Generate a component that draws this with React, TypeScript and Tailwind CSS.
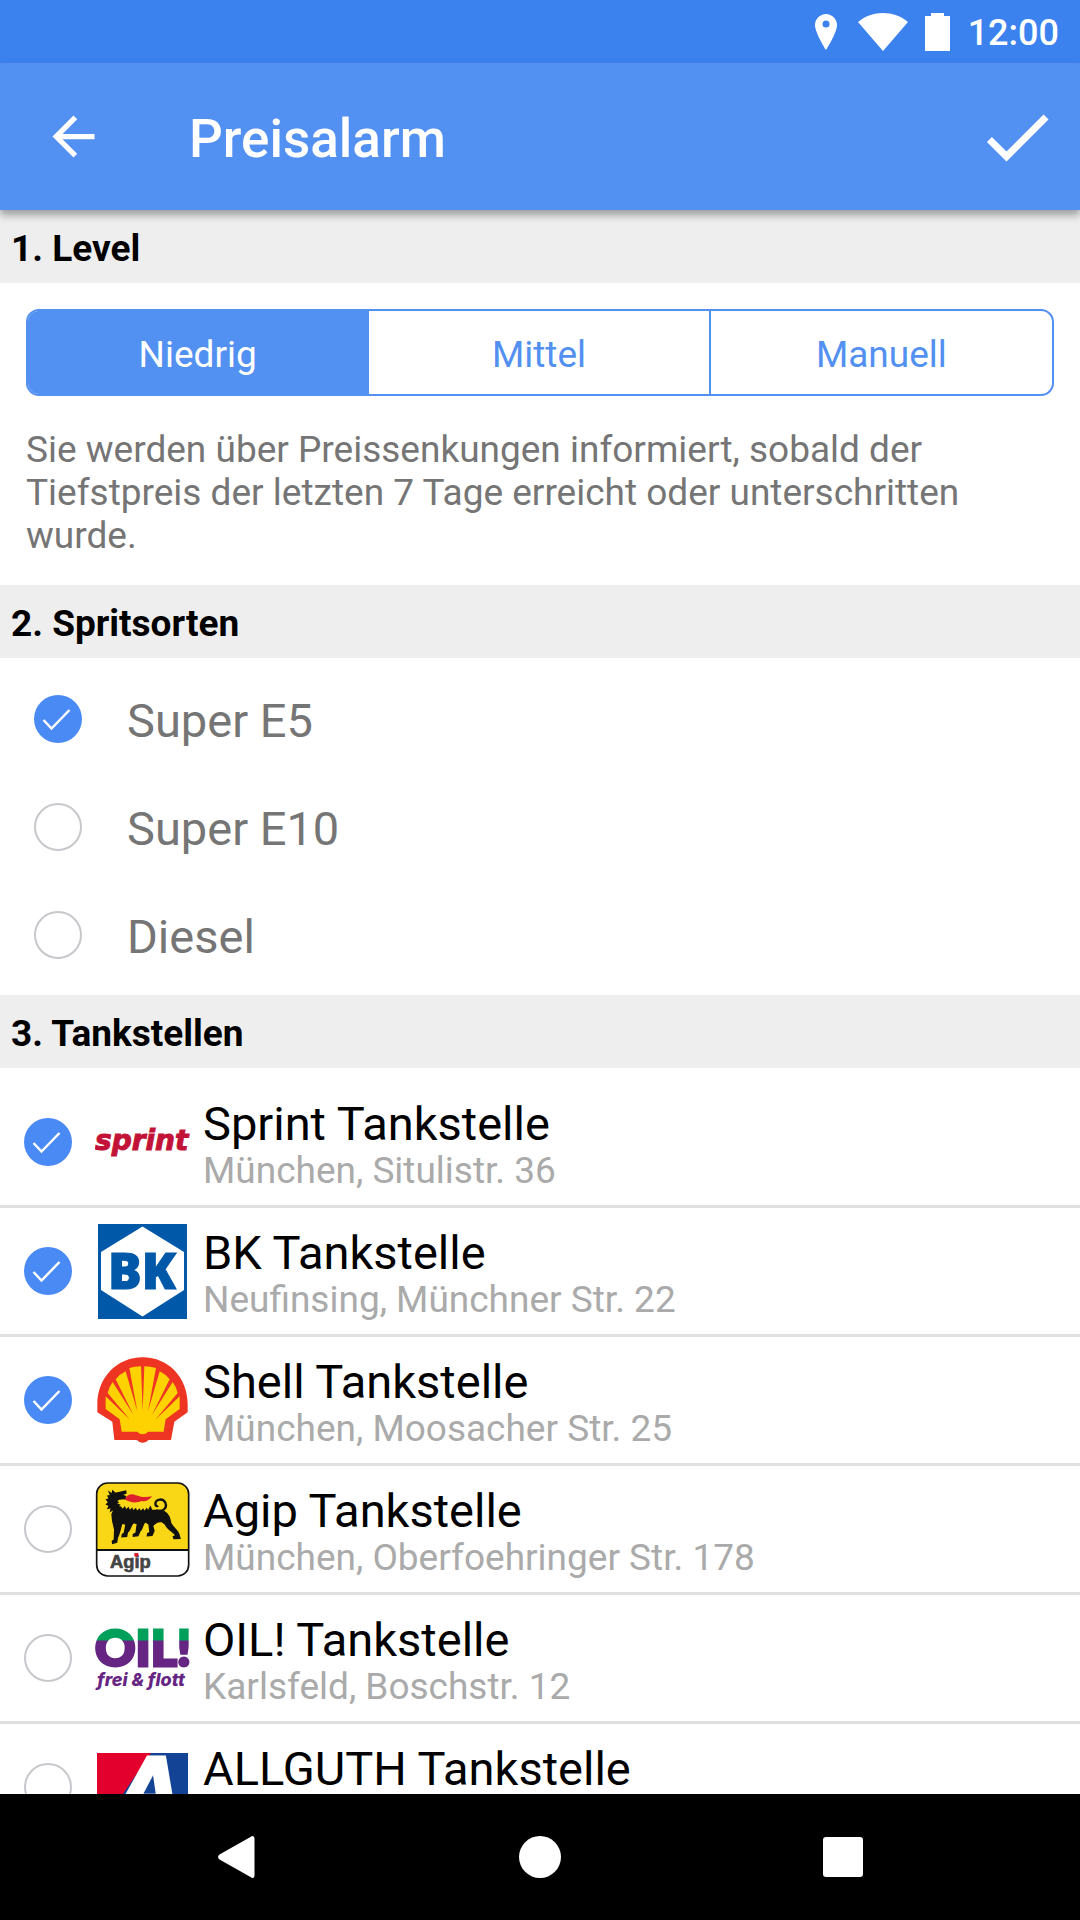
import { useState } from "react";
import type { InputHTMLAttributes, ReactNode } from "react";

type Station = { name: string; address?: string; logo: ReactNode };

function SprintLogo() {
  return (
    <svg viewBox="0 0 95 95" className="size-full" aria-hidden="true">
      <text
        x="0"
        y="55"
        fill="#c31237"
        stroke="#c31237"
        strokeWidth="1"
        fontFamily="DejaVu Sans"
        fontSize="28"
        fontWeight="700"
        fontStyle="italic"
      >
        sprint
      </text>
    </svg>
  );
}

function BkLogo() {
  return (
    <svg viewBox="0 0 95 95" className="size-full" aria-hidden="true">
      <rect x="3" width="89" height="95" fill="#0058a9" />
      <path d="M47.500 2.500 89 28v38L47.500 92.500 6 66V28z" fill="#fff" />
      <text
        x="47"
        y="65"
        textAnchor="middle"
        fill="#0058a9"
        stroke="#0058a9"
        strokeWidth="1"
        fontFamily="Open Sans"
        fontSize="50"
        fontWeight="800"
      >
        BK
      </text>
    </svg>
  );
}

function ShellLogo() {
  return (
    <svg viewBox="45 37 285 285" className="size-full" aria-hidden="true">
      <path
        d="M188 50C110 50 52 112 52 190v25l45 28 6 55h68c8 11 26 11 34 0h68l10-55 40-28v-25C323 112 266 50 188 50z"
        fill="#ee3524"
      />
      <path
        d="M125 273 119 236 77 205V167L150 237 83 157Q86 140 98 124L160 222 107 116Q120 100 137 92L172 212 148 82Q164 77 183 77L188 210 193 77Q212 77 228 82L204 212 239 92Q256 100 269 116L216 222 278 124Q290 140 293 157L226 237 299 167V205L257 236 251 273H204C196 283 180 283 172 273z"
        fill="#fed100"
      />
    </svg>
  );
}

function AgipLogo() {
  return (
    <svg viewBox="45 33 285 285" className="size-full" aria-hidden="true">
      <rect x="50" y="36" width="276" height="279" rx="33" fill="#fff" />
      <path d="M50 237V69a33 33 0 0 1 33-33h210a33 33 0 0 1 33 33v168z" fill="#f9d616" />
      <path d="M50 237h276" stroke="#111" strokeWidth="6" />
      <rect x="50" y="36" width="276" height="279" rx="33" fill="none" stroke="#111" strokeWidth="5" />
      <path
        d="M132 84C142 72 154 66 166 72 180 78 196 80 216 76 206 90 196 92 184 90 166 98 150 94 132 84z"
        fill="#dd1f2b"
      />
      <path
        d="M84 75 92 74 88 64 96 70 98 60 106 67 137 60 138 66 124 72 136 76 134 83 118 84 108 90 114 94 108 98 118 102 112 106 122 108 128 116 134 109 138 118 145 111 149 120 156 113 160 121 167 114 171 122 178 115 182 122 189 115 193 122 200 114 204 121 211 108 215 118 240 118C262 120 270 138 272 155 278 170 292 178 296 188L300 202 282 203 280 197 288 194C280 180 262 176 256 160L246 152C234 150 224 156 218 165L222 180 216 193 202 194 203 188 210 184 207 160 196 152C186 160 190 172 180 180L174 194 160 196 160 190 168 186 172 158 160 155C150 165 152 178 142 184L140 196 126 197 127 190 133 186 138 160 126 156C120 175 118 190 112 200L110 214 98 217 97 211 103 206 104 175 98 150 96 130 104 112 92 120 94 110 84 112 88 104 80 100 86 94 80 86 88 84z"
        fill="#111"
        stroke="#111"
        strokeWidth="4"
      />
      <path
        d="M228 118C250 125 262 110 256 95 250 82 228 82 226 98 226 106 232 106 234 104"
        fill="none"
        stroke="#111"
        strokeWidth="7"
      />
      <text
        x="90"
        y="291"
        fill="#444"
        stroke="#444"
        strokeWidth="2"
        fontFamily="Liberation Sans"
        fontSize="55"
        fontWeight="700"
      >
        Agip
      </text>
      <rect x="163" y="246" width="12" height="10" fill="#dd1f2b" />
    </svg>
  );
}

function OilLogo() {
  return (
    <svg viewBox="0 0 95 95" className="size-full" aria-hidden="true">
      <defs>
        <linearGradient id="oil" gradientUnits="userSpaceOnUse" x1="0" y1="29" x2="0" y2="30">
          <stop offset="0" stopColor="#00a05a" />
          <stop offset="1" stopColor="#662483" />
        </linearGradient>
      </defs>
      <text
        x="0"
        y="55"
        fill="url(#oil)"
        stroke="url(#oil)"
        strokeWidth="3"
        fontFamily="Lato"
        fontSize="50"
        fontWeight="900"
      >
        OIL!
      </text>
      <text x="2" y="75" fill="#662483" fontFamily="Inter" fontSize="18" fontWeight="800" fontStyle="italic">
        frei &amp; flott
      </text>
    </svg>
  );
}

function AllguthLogo() {
  return (
    <svg viewBox="0 0 95 95" className="size-full" aria-hidden="true">
      <rect x="2" y="13" width="91" height="70" fill="#134395" />
      <path d="M2 13h54L8 83H2z" fill="#e4002c" />
      <text
        x="19"
        y="83"
        fill="#fff"
        stroke="#fff"
        strokeWidth="4"
        fontFamily="Liberation Sans"
        fontSize="94"
        fontWeight="700"
        fontStyle="italic"
      >
        A
      </text>
    </svg>
  );
}

const levels = ["Niedrig", "Mittel", "Manuell"];

const fuels = ["Super E5", "Super E10", "Diesel"];

const stations: Station[] = [
  { name: "Sprint Tankstelle", address: "München, Situlistr. 36", logo: <SprintLogo /> },
  { name: "BK Tankstelle", address: "Neufinsing, Münchner Str. 22", logo: <BkLogo /> },
  { name: "Shell Tankstelle", address: "München, Moosacher Str. 25", logo: <ShellLogo /> },
  { name: "Agip Tankstelle", address: "München, Oberfoehringer Str. 178", logo: <AgipLogo /> },
  { name: "OIL! Tankstelle", address: "Karlsfeld, Boschstr. 12", logo: <OilLogo /> },
  { name: "ALLGUTH Tankstelle", logo: <AllguthLogo /> },
];

function RoundCheckbox(props: InputHTMLAttributes<HTMLInputElement>) {
  return (
    <span className="grid size-12 shrink-0 place-items-center">
      <input
        type="checkbox"
        className="peer col-start-1 row-start-1 size-12 appearance-none rounded-full border-2 border-[#c7c7cc] checked:border-0 checked:bg-[#4a8af4]"
        {...props}
      />
      <svg
        viewBox="0 0 48 48"
        className="pointer-events-none invisible col-start-1 row-start-1 size-12 peer-checked:visible"
        fill="none"
        stroke="#fff"
        strokeWidth="2.500"
        aria-hidden="true"
      >
        <path d="m9.500 25 8 8.500L35.500 15" />
      </svg>
    </span>
  );
}

function SectionTitle({ children }: { children: ReactNode }) {
  return <h2 className="bg-[#eeeeee] px-[11px] pt-[17px] pb-[13px] text-[37px] leading-[43px] font-bold">{children}</h2>;
}

function StatusBar() {
  return (
    <div className="flex h-[63px] shrink-0 items-center justify-end bg-[#3b82ee] pr-[21px] text-white">
      <svg viewBox="0 0 22 36" className="mr-[21px] h-9 w-[22px]" fill="currentColor" aria-hidden="true">
        <path
          fillRule="evenodd"
          d="M11 0C5 0 0 5 0 11c0 8 11 25 11 25s11-17 11-25C22 5 17 0 11 0zm0 6.500a3.500 3.500 0 1 1 0 7 3.500 3.500 0 0 1 0-7z"
        />
      </svg>
      <svg viewBox="0 0 50 38" className="mr-[17px] h-[38px] w-[50px]" fill="currentColor" aria-hidden="true">
        <path d="M0 9C14-3 36-3 50 9L25 38z" />
      </svg>
      <svg viewBox="0 0 25 38" className="mr-[18px] h-[38px] w-[25px]" fill="currentColor" aria-hidden="true">
        <path d="M6 0h13v3h6v35H0V3h6z" />
      </svg>
      <span className="pt-1 text-[36px] leading-[43px] font-medium">12:00</span>
    </div>
  );
}

export default function App() {
  const [level, setLevel] = useState("Niedrig");

  return (
    <div className="flex h-screen flex-col bg-white font-['Roboto',sans-serif] text-black">
      <StatusBar />

      <header className="z-10 flex h-[147px] shrink-0 items-center bg-[#5290f1] pr-[21px] pl-[42px] text-white shadow-[0_5px_8px_rgba(0,0,0,0.35)]">
        <button type="button" aria-label="Zurück">
          <svg viewBox="0 0 24 24" className="size-[63px]" fill="currentColor" aria-hidden="true">
            <path d="M20 11H7.830l5.590-5.590L12 4l-8 8 8 8 1.410-1.410L7.830 13H20v-2z" />
          </svg>
        </button>
        <h1 className="ml-[84px] flex-1 pt-1 text-[53px] leading-[62px] font-medium">Preisalarm</h1>
        <button type="button" aria-label="Speichern">
          <svg viewBox="0 0 24 24" className="size-[84px]" fill="currentColor" aria-hidden="true">
            <path d="M9 16.170 4.830 12l-1.420 1.410L9 19 21 7l-1.410-1.410z" />
          </svg>
        </button>
      </header>

      <main className="min-h-0 flex-1 overflow-y-auto [scrollbar-width:none]">
        <section>
          <SectionTitle>1. Level</SectionTitle>
          <div className="px-[26px] pt-[26px] pb-7">
            <div className="grid grid-cols-3 divide-x-2 divide-[#5290f1] overflow-hidden rounded-[13px] border-2 border-[#5290f1]">
              {levels.map((name) => (
                <button
                  key={name}
                  type="button"
                  aria-pressed={level === name}
                  onClick={() => setLevel(name)}
                  className="pt-[22px] pb-[18px] text-[37px] leading-[43px] text-[#5290f1] aria-pressed:bg-[#5290f1] aria-pressed:text-white"
                >
                  {name}
                </button>
              ))}
            </div>
            <p className="mt-8 text-[37px] leading-[43px] text-[#757575]">
              Sie werden über Preissenkungen informiert, sobald der Tiefstpreis der letzten 7 Tage erreicht oder
              unterschritten wurde.
            </p>
          </div>
        </section>

        <section>
          <SectionTitle>2. Spritsorten</SectionTitle>
          <div className="pt-[7px] pb-1.5">
            {fuels.map((fuel, index) => (
              <label key={fuel} className="flex h-[108px] items-center gap-[45px] px-[34px] text-[47px] text-[#757575]">
                <RoundCheckbox defaultChecked={index === 0} />
                <span className="pt-[3px] leading-[55px]">{fuel}</span>
              </label>
            ))}
          </div>
        </section>

        <section>
          <SectionTitle>3. Tankstellen</SectionTitle>
          <ul className="divide-y-3 divide-[#e0e0e0] pt-[11px]">
            {stations.map((station, index) => (
              <li key={station.name}>
                <label className="flex h-[126px] items-center px-6">
                  <RoundCheckbox defaultChecked={index < 3} />
                  <span className="ml-[23px] size-[95px] shrink-0">{station.logo}</span>
                  <span className="ml-[13px] flex flex-col pt-1.5">
                    <span className="text-[47px] leading-[50px]">{station.name}</span>
                    <span className="min-h-[43px] text-[37px] leading-[43px] text-[#aaaaaa]">{station.address}</span>
                  </span>
                </label>
              </li>
            ))}
          </ul>
        </section>
      </main>

      <nav className="grid h-[126px] shrink-0 grid-cols-3 place-items-center bg-black px-[85px] text-white">
        <button type="button" aria-label="Zurück">
          <svg viewBox="0 0 42 42" className="size-[42px]" fill="currentColor" aria-hidden="true">
            <path d="M36.500 0Q38.500 0 38.500 2.500v37q0 2.500-2 2.500-1 0-2-1L3.500 23.500q-3-2.500 0-5L34.500 1q1-1 2-1z" />
          </svg>
        </button>
        <button type="button" aria-label="Startbildschirm">
          <svg viewBox="0 0 42 42" className="size-[42px]" fill="currentColor" aria-hidden="true">
            <circle cx="21" cy="21" r="21" />
          </svg>
        </button>
        <button type="button" aria-label="Übersicht">
          <svg viewBox="0 0 42 42" className="size-[42px]" fill="currentColor" aria-hidden="true">
            <rect x="1" y="1" width="40" height="40" rx="3" />
          </svg>
        </button>
      </nav>
    </div>
  );
}
